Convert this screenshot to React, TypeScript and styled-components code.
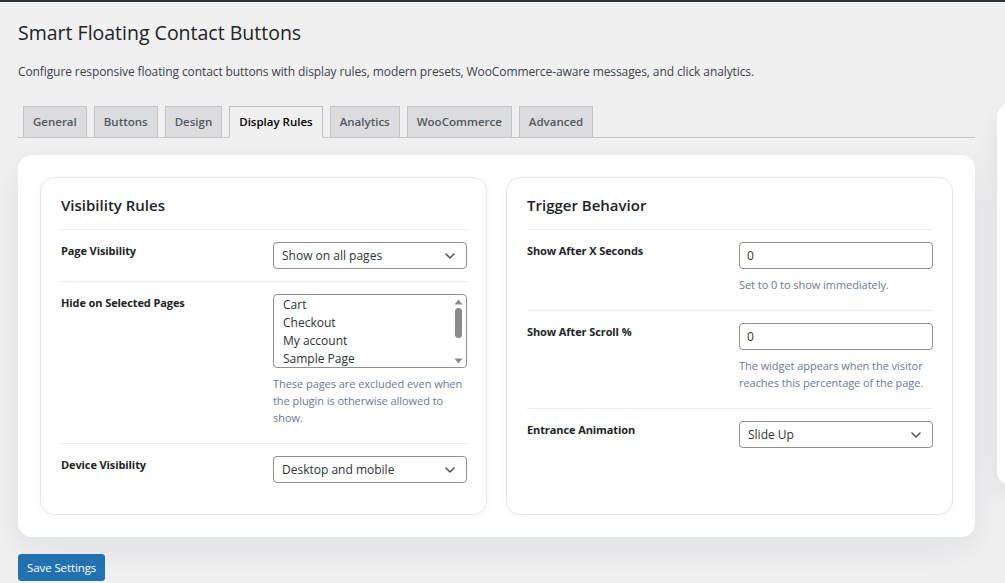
import React from 'react';
import styled, { createGlobalStyle } from 'styled-components';

const GlobalStyle = createGlobalStyle`
    html, body {
        margin: 0;
        padding: 0;
        background: #f0f0f1;
        overflow: hidden;
    }
    body {
        font-family: "Open Sans", "Noto Sans", sans-serif;
        color: #1d2327;
        font-size: 13px;
    }
    * {
        box-sizing: border-box;
    }
`

const AdminBarEdge = styled.div`
    height: 2px;
    background: #2c3338;
`

const Wrap = styled.div`
    padding: 0 0 0 18px;
`

const Title = styled.h1`
    margin: 17px 0 0;
    font-size: 19.5px;
    line-height: 28px;
    font-weight: 400;
    color: #1d2327;
`

const Description = styled.p`
    margin: 15px 0 0;
    font-size: 12px;
    letter-spacing: -0.1px;
    line-height: 20px;
    color: #3c434a;
`

const Layout = styled.div`
    display: flex;
    align-items: flex-start;
    gap: 22px;
    margin-top: 24px;
`

const MainColumn = styled.div`
    width: 957px;
    flex-shrink: 0;
`

const Sidebar = styled.aside`
    width: 280px;
    height: 382px;
    flex-shrink: 0;
    margin-top: -3px;
    background: #fff;
    border-radius: 14px;
    box-shadow: 0 10px 30px rgba(15, 23, 42, 0.07);
`

const TabBar = styled.nav`
    display: flex;
    border-bottom: 1px solid #c3c4c7;
`

const Tab = styled.span<{ $active?: boolean }>`
    margin-left: 5px;
    margin-bottom: -1px;
    padding: 5px 9px;
    font-size: 11.5px;
    line-height: 20px;
    font-weight: 600;
    color: ${props => props.$active ? '#000' : '#50575e'};
    background: ${props => props.$active ? '#f0f0f1' : '#dcdcde'};
    border: 1px solid #c3c4c7;
    border-bottom-color: ${props => props.$active ? '#f0f0f1' : '#c3c4c7'};
    & + & {
        margin-left: 7px;
    }
`

const Panel = styled.section`
    margin-top: 17px;
    padding: 22px;
    background: #fff;
    border-radius: 14px;
    box-shadow: 0 12px 34px rgba(15, 23, 42, 0.07);
    display: grid;
    grid-template-columns: 1fr 1fr;
    gap: 19px;
`

const Card = styled.div`
    border: 1px solid #e3e8ef;
    border-radius: 14px;
    padding: 16px 19px 19px 20px;
    background: #fff;
    box-shadow: 0 2px 8px rgba(15, 23, 42, 0.03);
`

const CardTitle = styled.h2`
    margin: 0;
    padding-bottom: 13px;
    font-size: 15px;
    line-height: 22px;
    font-weight: 600;
    color: #1d2327;
`

const Row = styled.div`
    display: grid;
    grid-template-columns: 1fr 194px;
    align-items: start;
    padding: 12px 0;
    border-top: 1px solid #e9edf2;
`

const Label = styled.div`
    font-size: 11px;
    line-height: 17px;
    font-weight: 700;
    letter-spacing: -0.1px;
    color: #1d2327;
`

const SelectBox = styled.div`
    height: 27px;
    display: flex;
    align-items: center;
    justify-content: space-between;
    padding: 0 11px 0 8px;
    border: 1px solid #8c8f94;
    border-radius: 4px;
    background: #fff;
    font-size: 12px;
    color: #2c3338;
`

const TextInput = styled.input`
    display: block;
    width: 100%;
    height: 27px;
    padding: 0 7px;
    border: 1px solid #8c8f94;
    border-radius: 4px;
    background: #fff;
    font-family: inherit;
    font-size: 12px;
    color: #2c3338;
`

const ListBox = styled.div`
    height: 74px;
    display: flex;
    border: 1px solid #8c8f94;
    border-radius: 4px;
    background: #fff;
    overflow: hidden;
`

const Options = styled.ul`
    flex: 1;
    margin: 0;
    padding: 1px 0 0 9px;
    list-style: none;
`

const Option = styled.li`
    font-size: 12px;
    line-height: 18px;
    color: #2c3338;
`

const ScrollTrack = styled.div`
    width: 15px;
    display: flex;
    flex-direction: column;
    align-items: center;
    padding: 4px 0 3px;
`

const ScrollThumb = styled.div`
    width: 7px;
    height: 30px;
    margin-top: 3px;
    border-radius: 4px;
    background: #8a8a8a;
`

const ScrollSpacer = styled.div`
    flex: 1;
`

const Help = styled.p`
    margin: 7px 0 5px;
    font-size: 11px;
    letter-spacing: -0.05px;
    line-height: 17px;
    color: #6a7a90;
`

const SaveButton = styled.button`
    margin-top: 17px;
    height: 27px;
    padding: 0 8px;
    border: 1px solid #2271b1;
    border-radius: 3px;
    background: #2271b1;
    color: #fff;
    font-family: inherit;
    font-size: 11.5px;
    letter-spacing: -0.1px;
    font-weight: 500;
`

const Chevron = () => (
    <svg width="10" height="6" viewBox="0 0 10 6">
        <path d="M1 1l4 4 4-4" fill="none" stroke="#50575e" strokeWidth="1.6" strokeLinecap="round" strokeLinejoin="round" />
    </svg>
)

const Arrow = ({ up }: { up?: boolean }) => (
    <svg width="9" height="6" viewBox="0 0 9 6">
        <path d={up ? 'M4.5 0.5L8.5 5.5H0.5Z' : 'M4.5 5.5L8.5 0.5H0.5Z'} fill="#8a8a8a" />
    </svg>
)

const Select = ({ value }: { value: string }) => <SelectBox><span>{value}</span><Chevron /></SelectBox>

const tabs = ['General', 'Buttons', 'Design', 'Display Rules', 'Analytics', 'WooCommerce', 'Advanced'];
const pages = ['Cart', 'Checkout', 'My account', 'Sample Page'];

export default function App() {
    return <>
        <GlobalStyle />
        <AdminBarEdge />
        <Wrap>
            <Title>Smart Floating Contact Buttons</Title>
            <Description>Configure responsive floating contact buttons with display rules, modern presets, WooCommerce-aware messages, and click analytics.</Description>
            <Layout>
                <MainColumn>
                    <TabBar>
                        {tabs.map(t => <Tab key={t} $active={t === 'Display Rules'}>{t}</Tab>)}
                    </TabBar>
                    <Panel>
                        <Card>
                            <CardTitle>Visibility Rules</CardTitle>
                            <Row>
                                <Label>Page Visibility</Label>
                                <Select value="Show on all pages" />
                            </Row>
                            <Row>
                                <Label>Hide on Selected Pages</Label>
                                <div>
                                    <ListBox>
                                        <Options>
                                            {pages.map(p => <Option key={p}>{p}</Option>)}
                                        </Options>
                                        <ScrollTrack>
                                            <Arrow up />
                                            <ScrollThumb />
                                            <ScrollSpacer />
                                            <Arrow />
                                        </ScrollTrack>
                                    </ListBox>
                                    <Help>These pages are excluded even when the plugin is otherwise allowed to show.</Help>
                                </div>
                            </Row>
                            <Row>
                                <Label>Device Visibility</Label>
                                <Select value="Desktop and mobile" />
                            </Row>
                        </Card>
                        <Card>
                            <CardTitle>Trigger Behavior</CardTitle>
                            <Row>
                                <Label>Show After X Seconds</Label>
                                <div>
                                    <TextInput type="number" defaultValue="0" />
                                    <Help>Set to 0 to show immediately.</Help>
                                </div>
                            </Row>
                            <Row>
                                <Label>Show After Scroll %</Label>
                                <div>
                                    <TextInput type="number" defaultValue="0" />
                                    <Help>The widget appears when the visitor reaches this percentage of the page.</Help>
                                </div>
                            </Row>
                            <Row>
                                <Label>Entrance Animation</Label>
                                <Select value="Slide Up" />
                            </Row>
                        </Card>
                    </Panel>
                    <SaveButton>Save Settings</SaveButton>
                </MainColumn>
                <Sidebar />
            </Layout>
        </Wrap>
    </>
}
